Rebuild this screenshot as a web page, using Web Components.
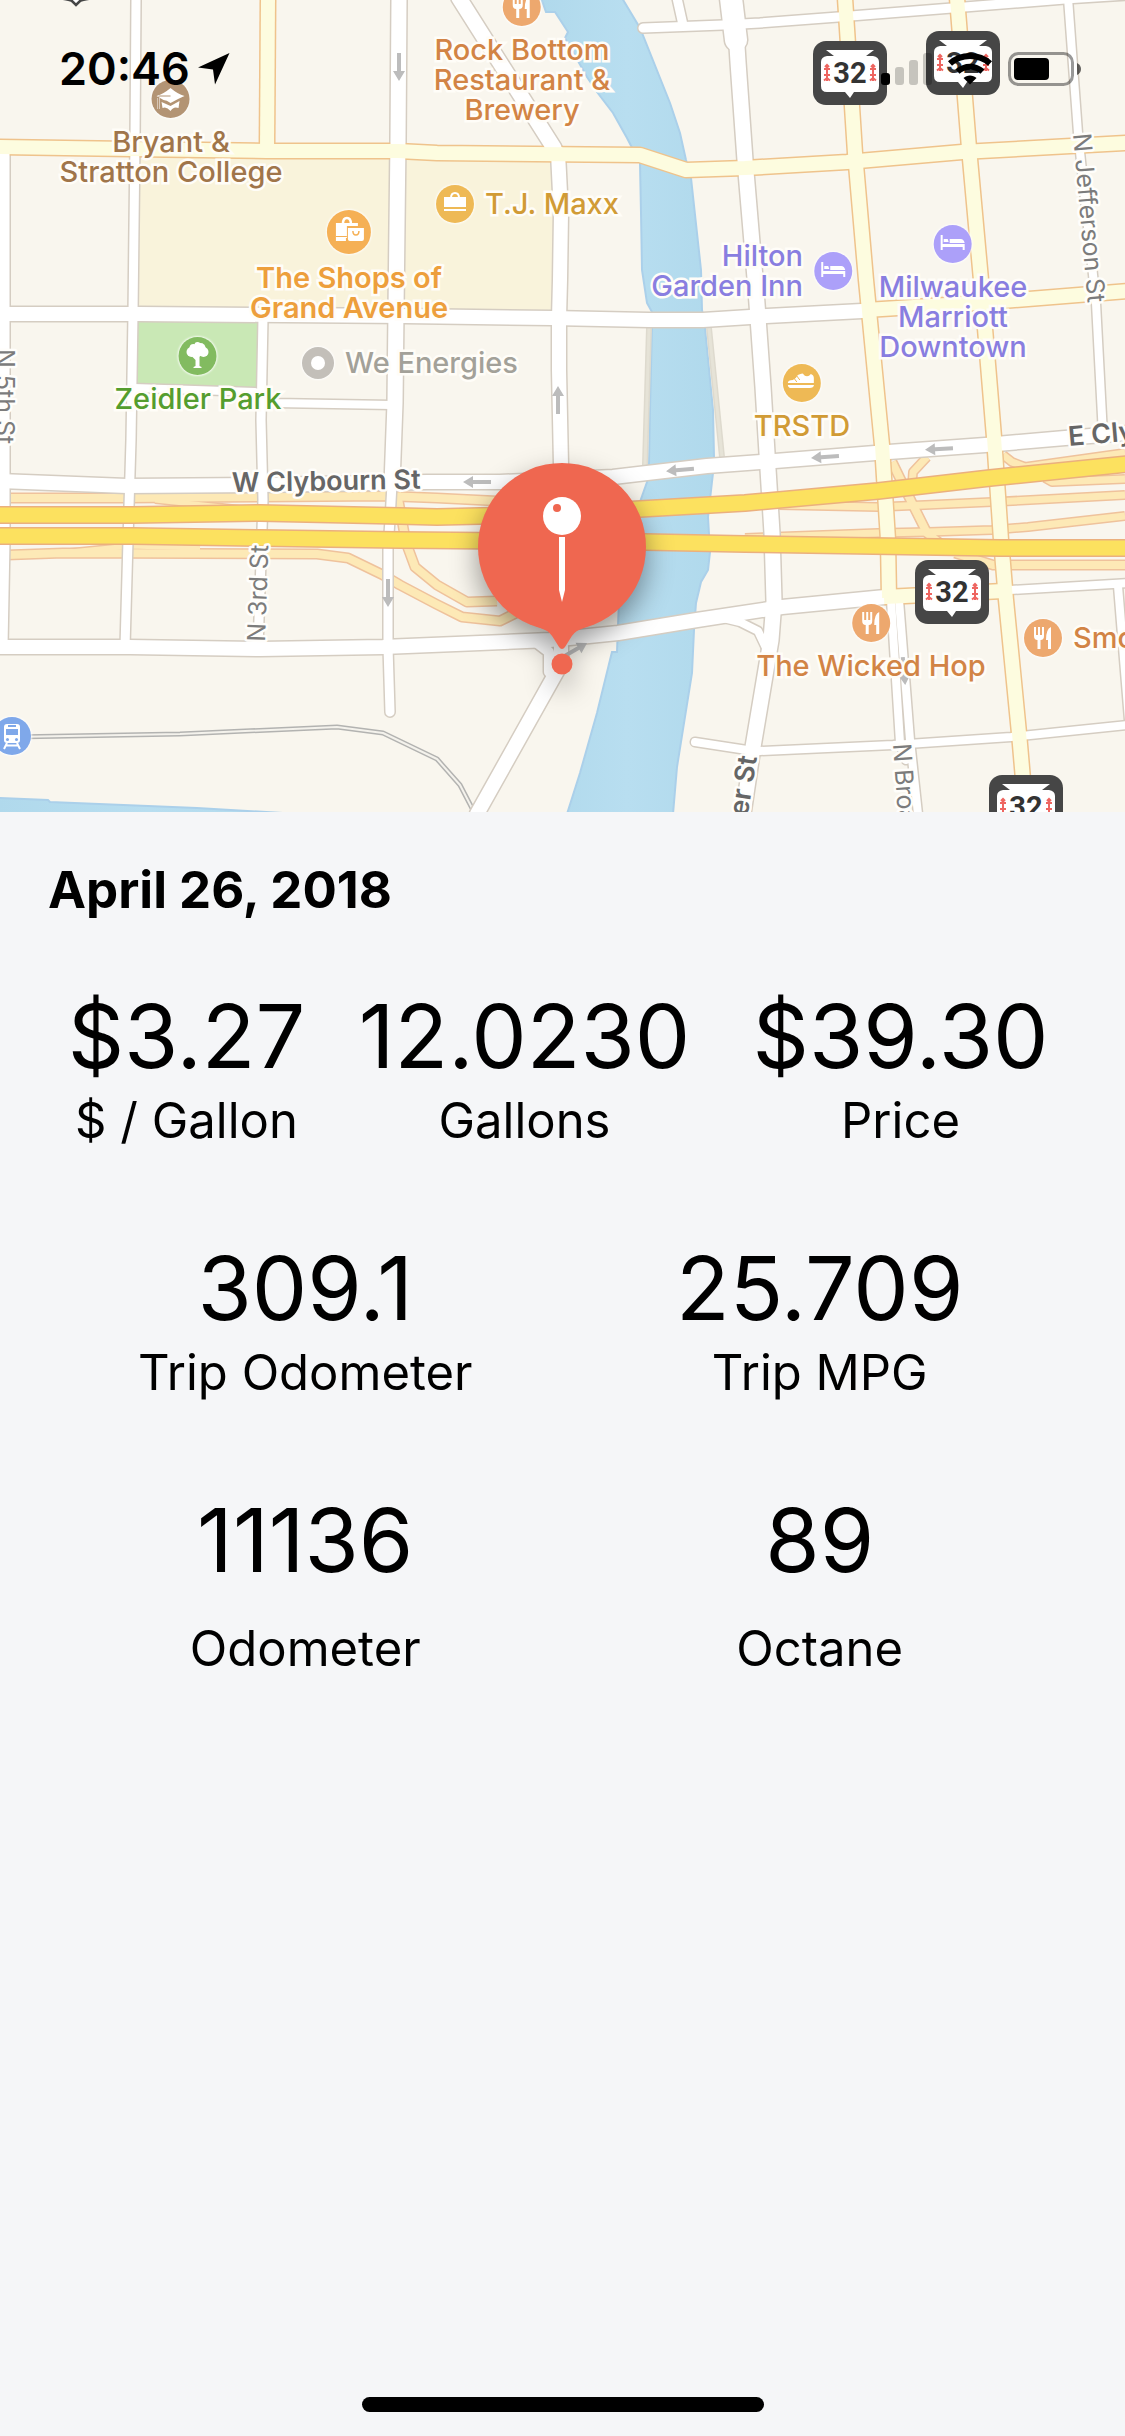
<!DOCTYPE html>
<html lang="en">
<head>
<meta charset="utf-8">
<meta name="viewport" content="width=device-width, initial-scale=1">
<title>Fill-up details</title>
<style>
  html, body { margin: 0; height: 100%; }
  body { background: #f5f6f8; color: #000; font-family: Inter, "Liberation Sans", sans-serif; }
</style>
</head>
<body>
<fillup-screen>
  <status-bar slot="status" time="20:46"></status-bar>
  <city-map slot="map">
    <map-place icon="school" style="--x:171;--y:99;--tint:#b39474;--ink:#a0754a">Bryant &amp;<br>Stratton College</map-place>
    <map-place icon="food" style="--x:522;--y:7;--tint:#eda86e;--ink:#d28445">Rock Bottom<br>Restaurant &amp;<br>Brewery</map-place>
    <map-place icon="bag" side="right" style="--x:455;--y:204;--tint:#eeb955;--ink:#d19b35">T.J. Maxx</map-place>
    <map-place icon="mall" major style="--x:349;--y:232;--r:22px;--tint:#f5b055;--ink:#ed9f3c">The Shops of<br>Grand Avenue</map-place>
    <map-place icon="tree" style="--x:198;--y:356;--tint:#82bb60;--ink:#559d2e">Zeidler Park</map-place>
    <map-place icon="dot" side="right" style="--x:318;--y:363;--r:16px;--tint:#c3bfb9;--ink:#a3a199">We Energies</map-place>
    <map-place icon="bed" side="left" style="--x:833;--y:271;--tint:#aca0f9;--ink:#897ee0">Hilton<br>Garden Inn</map-place>
    <map-place icon="bed" style="--x:953;--y:244;--tint:#aca0f9;--ink:#897ee0">Milwaukee<br>Marriott<br>Downtown</map-place>
    <map-place icon="shoe" style="--x:802;--y:383;--tint:#eeb955;--ink:#d19b35">TRSTD</map-place>
    <map-place icon="food" style="--x:871;--y:623;--tint:#eda86e;--ink:#d28445">The Wicked Hop</map-place>
    <map-place icon="food" side="right" style="--x:1043;--y:638;--tint:#eda86e;--ink:#d28445">Smo</map-place>
    <map-place icon="train" style="--x:12;--y:736;--tint:#7fa8ea"></map-place>
    <route-shield style="--x:850;--y:73">32</route-shield>
    <route-shield style="--x:963;--y:63">32</route-shield>
    <route-shield style="--x:952;--y:592">32</route-shield>
    <route-shield style="--x:1026;--y:807">32</route-shield>
    <map-pin style="--x:562;--y:664"></map-pin>
  </city-map>
  <span slot="date">April 26, 2018</span>
  <stat-row three>
    <stat-item label="$ / Gallon">$3.27</stat-item>
    <stat-item label="Gallons">12.0230</stat-item>
    <stat-item label="Price">$39.30</stat-item>
  </stat-row>
  <stat-row>
    <stat-item label="Trip Odometer">309.1</stat-item>
    <stat-item label="Trip MPG">25.709</stat-item>
  </stat-row>
  <stat-row>
    <stat-item loose label="Odometer">11136</stat-item>
    <stat-item loose label="Octane">89</stat-item>
  </stat-row>
</fillup-screen>

<script>
const define = (name, html, setup) => {
  const template = document.createElement('template');
  template.innerHTML = html;
  customElements.define(name, class extends HTMLElement {
    constructor() {
      super();
      this.attachShadow({ mode: 'open' }).append(template.content.cloneNode(true));
    }
    connectedCallback() { if (setup) setup(this, this.shadowRoot); }
  });
};

define('fillup-screen', `
  <style>
    :host { display: flex; flex-direction: column; min-height: 100vh; }
    header { position: relative; }
    .status { position: absolute; inset: 0 0 auto 0; z-index: 2; }
    main { flex: 1; padding: 46px 48px 0; }
    h1 { margin: 0 0 60px; font-size: 51px; line-height: 64px; font-weight: 700; }
    .stats { display: flex; flex-direction: column; gap: 82px; }
    footer { display: flex; justify-content: center; padding: 24px; }
    .home { width: 402px; height: 15px; border-radius: 8px; background: #000; }
  </style>
  <header>
    <slot name="map"></slot>
    <div class="status"><slot name="status"></slot></div>
  </header>
  <main>
    <h1><slot name="date"></slot></h1>
    <div class="stats"><slot></slot></div>
  </main>
  <footer><div class="home"></div></footer>
`);

define('stat-row', `
  <style>
    :host { display: grid; grid-template-columns: 1fr 1fr; }
    :host([three]) { grid-template-columns: 277fr 399fr 353fr; }
  </style>
  <slot></slot>
`);

define('stat-item', `
  <style>
    :host { display: flex; flex-direction: column; align-items: center; white-space: nowrap; }
    .value { font-size: 88px; line-height: 108px; }
    .label { font-size: 49px; line-height: 62px; }
    :host([loose]) { gap: 24px; }
  </style>
  <div class="value"><slot></slot></div>
  <div class="label"></div>
`, (el, root) => { root.querySelector('.label').textContent = el.getAttribute('label'); });

define('status-bar', `
  <style>
    :host { display: flex; align-items: center; gap: 16px; height: 34px; padding: 52px 44px 0 59px; }
    time { font-size: 45px; line-height: 34px; font-weight: 600; }
    svg { display: block; flex: none; }
    .grow { flex: 1; }
    .where { margin-left: -8px; }
  </style>
  <time></time>
  <svg class="where" width="32" height="32" viewBox="0 0 32 32"><path d="M0 14.500L31.500 0 17 31.500 15 16.500z"/></svg>
  <div class="grow"></div>
  <svg width="51" height="34" viewBox="0 0 51 34">
    <rect y="21" width="9" height="12" rx="3"/>
    <g opacity=".2"><rect x="14" y="15" width="9" height="18" rx="3"/><rect x="28" y="8" width="9" height="25" rx="3"/><rect x="42" y="1" width="9" height="32" rx="3"/></g>
  </svg>
  <svg width="44" height="34" viewBox="0 0 44 34">
    <g fill="none" stroke="#000" stroke-width="6"><path d="M2 11.500C13 1.500 31 1.500 42 11.500"/><path d="M9.500 19.500C17 13 27 13 34.500 19.500"/></g>
    <path d="M15.500 26C19 22.500 25 22.500 28.500 26L22 32.500z"/>
  </svg>
  <svg width="73" height="34" viewBox="0 0 73 34">
    <rect x="1.500" y="1.500" width="63" height="31" rx="9" fill="none" stroke="#000" stroke-width="3" opacity=".4"/>
    <rect x="6" y="6" width="35" height="22" rx="4"/>
    <path d="M69 11q4 2 4 6t-4 6z" opacity=".6"/>
  </svg>
`, (el, root) => { root.querySelector('time').textContent = el.getAttribute('time'); });

/* Items on the map stand at --x / --y of the 1125 x 812 drawing. */
const anchored = `
  position: absolute;
  left: calc(var(--x) / 1125 * 100%);
  top: calc(var(--y) / 812 * 100%);
`;

const icons = {
  food: '<path d="M-9-11h2v8h2v-8h2v8h2v-8h2V-2q0 4-3.500 4V11h-3V2Q-9 2-9-2zM8-11V11H5V2H3Q3-9 8-11z"/>',
  school: '<path d="M-14-3Q-7-5 0-11 7-5 14-3 7 0 0 4-4 1-7 1zM-9 3 0 7 9 2 8 9Q3 7 0 12-4 7-8 9zM-13-1h2v11h-2z"/><path d="M0-3h-11q-1 0-1 2v11" fill="none" stroke="var(--tint)" stroke-width="1"/>',
  bag: '<path d="M-11-7h22V3h-22zM-11 5h22v2h-22z"/><path d="M-4-6q0-5 4-5t4 5" fill="none" stroke="#fff" stroke-width="2"/>',
  mall: '<path d="M-13-9h22v3H-2v12h-11zM-13 5.500h10V9h-10zM-1-4h16V7q0 2-2 2H1q-2 0-2-2z"/><path d="M-13 4.500h11" stroke="var(--tint)"/><path d="M-6-8q0-6 4-6t4 6" fill="none" stroke="#fff" stroke-width="2.500"/><path d="M4-1q0 4 3 4t3-4" fill="none" stroke="var(--tint)" stroke-width="1.500"/>',
  tree: '<circle cx="-6" cy="-4" r="5"/><circle cx="6" cy="-4" r="5"/><circle cx="-4" cy="-8" r="4"/><circle cx="3" cy="-8" r="5"/><circle cx="0" cy="-11" r="3"/><circle cx="0" cy="-3" r="4"/><path d="M-2-2h4L2 10l2 1v1h-8v-1l2-1v-6l-4-4z"/>',
  dot: '<circle r="7"/>',
  bed: '<path d="M-12-9h2V0h22v6h-2V3h-20v3h-2zM-9-5h4l1 3h-5zM-3-5H8q3 0 4 4H-3z"/>',
  shoe: '<path d="M-14 0q0-3 5-3 3-1 5-5 6-3 6 0 4 3 7-1 3 1 3 4v5zM-14 2h26v1q-1 2-4 2H-12q-2-1-2-3z"/><path d="M-8-5l3 4M-5-7l3 4" stroke="var(--tint)" stroke-width="1"/>',
  train: '<path d="M-5-12H5q3 0 3 3V4q0 3-3 3H-5q-3 0-3-3v-13q0-3 3-3z"/><g fill="var(--tint)"><path d="M-4-11h8v2h-8zM-6-7H6v6H-6z"/><circle cx="-4.500" cy="3.500" r="1.500"/><circle cx="4.500" cy="3.500" r="1.500"/></g><path d="M-5 7-8 13M5 7 8 13M-6 9.500H6" stroke="#fff" stroke-width="2"/>'
};

define('map-place', `
  <style>
    :host { ${anchored} --r: 19px; display: flex; flex-direction: column; align-items: center; gap: 9px; width: max-content;
      transform: translate(-50%, calc(var(--r) * -1)); color: var(--ink); text-align: center; white-space: nowrap;
      font-size: 29px; line-height: 30px; font-weight: 500; }
    :host([major]) { font-weight: 600; }
    :host([side]) { flex-direction: row; gap: 11px; text-align: left; transform: translate(calc(var(--r) * -1), -50%); }
    :host([side="left"]) { flex-direction: row-reverse; text-align: right; transform: translate(calc(var(--r) - 100%), -50%); }
    svg { flex: none; width: calc(var(--r) * 2); height: calc(var(--r) * 2); border-radius: 50%; background: var(--tint);
      box-shadow: 0 0 2px 1px #fffc; fill: #fff; }
    .label { -webkit-text-stroke: 5px #fffdf8; paint-order: stroke fill; }
  </style>
  <svg aria-hidden="true"></svg>
  <div class="label"><slot></slot></div>
`, (el, root) => {
  const svg = root.querySelector('svg');
  const r = parseInt(el.style.getPropertyValue('--r')) || 19;
  svg.setAttribute('viewBox', [-r, -r, 2 * r, 2 * r].join(' '));
  svg.innerHTML = icons[el.getAttribute('icon')];
});

define('route-shield', `
  <style>
    :host { ${anchored} display: grid; place-items: center; width: 74px; height: 64px; transform: translate(-50%, -50%);
      color: #333; font: 700 29px/32px Roboto, "Liberation Sans", sans-serif; }
    svg, span { grid-area: 1 / 1; }
    span { z-index: 1; }
  </style>
  <svg width="74" height="64" viewBox="0 0 74 64" aria-hidden="true">
    <rect width="74" height="64" rx="13" fill="#464646"/>
    <path d="M13 9H61L53 15H60Q66 16 66 21V45Q66 51 60 51H41L37 57 32 51H14Q8 51 8 45V21Q8 16 14 15H21z" fill="#fff"/>
    <g stroke="#ee6560" stroke-width="2" fill="none"><path d="M14 24V40M11 28H17M11 34H17M11 39.500 14 37 17 39.500M12 26l2-2 2 2"/><path d="M60 24V40M57 28H63M57 34H63M57 39.500 60 37 63 39.500M58 26l2-2 2 2"/></g>
  </svg>
  <span><slot></slot></span>
`);

define('map-pin', `
  <style>
    :host { ${anchored} display: block; transform: translate(-50%, -201px); }
    svg { display: block; overflow: visible; filter: drop-shadow(0 12px 14px rgba(0, 0, 0, .4)); }
  </style>
  <svg width="168" height="212" viewBox="0 0 168 212" aria-hidden="true">
    <g fill="#ef6750"><circle cx="84" cy="84" r="84"/><path d="M58 163L67 167Q72 169 76 176L81 184Q84 188 87 184L92 176Q96 169 101 167L110 163z"/><circle cx="84" cy="201" r="10.500"/></g>
    <circle cx="84" cy="53" r="19" fill="#fff"/><circle cx="79" cy="45" r="4" fill="#ef6750"/>
    <path d="M81 74h6v53l-3 12-3-12z" fill="#fff"/>
  </svg>
`);

/* Streets: [width, points]; each class is drawn as a casing and then a fill. */
const streets = {
  path: [[3, '649,328 645,465'], [3, '709,328 722,457']],
  ramp: [
    [8, '7,498 127,498 262,497 385,496 437,498 497,501 560,506'],
    [5, '155,500 300,515'], [5, '60,553 130,546 200,548'],
    [8, '397,493 405,537 408,548 415,567 437,585 467,602 497,601'],
    [8, '7,555 63,553 317,554 348,558 383,575 400,585 436,604 462,617 500,621 530,606'],
    [7, '778,505 878,507 925,505 992,502 1125,495'],
    [7, '745,538 878,533 928,532 992,530 1028,527 1125,516'],
    [8, '892,462 912,503 927,533 942,545'], [7, '927,457 913,472 912,486'],
    [8, '955,553 993,565 1125,565'], [7, '1003,455 1012,462 1025,467 1125,453'],
    [7, '1045,478 1052,482 1125,479']
  ],
  white: [
    [13, '3,152 3,540 1,647'], [9, '136,0 135,140 133,314 131,440 128,540 125,647'],
    [9, '263,318 261,420 263,500 261,560 258,648'], [15, '399,0 398,140 396,310 395,403 392,484'],
    [9, '392,484 390,520 388,548 388,647 390,712'], [15, '459,-2 554,148'],
    [14, '558,153 561,213 560,280 559,318 559,370 561,465 561,664 477,814'],
    [14, '-2,314 140,314 405,316 552,318 649,320 703,320 750,317 862,311'],
    [14, '-2,481 127,486 260,485 427,482 500,482 613,477 647,473 707,466 775,461 875,453 985,445 1065,438 1127,433'],
    [14, '-2,647 130,647 260,649 383,647 480,643 550,640 618,633 697,620 782,607 885,597'],
    [22, '731,-2 736,40'], [15, '736,30 738,62 745,160 756,290 763,387 767,453 772,533 774,601 771,640 753,747 743,814'],
    [9, '677,-2 683,25'], [9, '643,28 723,25 760,23 838,17 952,8 1065,-1 1127,-5'],
    [8, '1068,-2 1078,133 1096,303 1103,435'],
    [8, '891,600 900,743 906,760'], [8, '899,600 910,740 918,814'],
    [8, '695,742 747,750 760,751 893,745 1011,737 1127,725'],
    [8, '1010,590 1113,584 1127,583'], [8, '1118,586 1129,720'],
    [8, '715,616 740,622 758,631 767,650'],
    [8, '134,388 255,392 275,403 392,405'], [10, '536,642 549,652 549,672']
  ],
  yellow: [
    [14, '-2,147 130,149 267,151 398,151 437,153 640,155 686,170 745,168 847,162 962,152 1127,143'],
    [14, '268,-2 267,150'], [14, '845,-2 855,153 866,280 882,445 888,540 889,598'],
    [14, '957,-2 969,148 981,280 994,437 1001,540 1006,600 1019,733 1026,814'],
    [14, '866,310 978,303 1127,291'], [14, '884,597 905,596 1003,591']
  ],
  motorway: [
    [15, '-2,515 133,515 260,513 400,516 437,517 480,516 560,514 640,509 745,503 878,491 990,478 1127,464'],
    [15, '-2,536 133,536 260,538 400,540 645,542 745,544 1000,548 1127,548']
  ]
};
const inks = {
  path: ['#dedace', '#e6e3d7'], ramp: ['#efc29c', '#fde9b6'], white: ['#d5cdc2', '#ffffff'],
  yellow: ['#efc38c', '#fdfcdf'], motorway: ['#ebb07e', '#fce15f']
};
const lines = (kind, part) => streets[kind].map(([w, pts]) =>
  `<polyline points="${pts}" stroke="${inks[kind][part]}" stroke-width="${part ? w : w + 3}"/>`).join('');
const both = kind => lines(kind, 0) + lines(kind, 1);
const arrow = (x, y, turn) => `<path d="M0-14 6-4H2V14H-2V-4H-6z" transform="translate(${x} ${y}) rotate(${turn})"/>`;
const street = (x, y, turn, text, more = '') => `<text transform="translate(${x} ${y}) rotate(${turn})" ${more}>${text}</text>`;

define('city-map', `
  <style>
    :host { display: block; position: relative; overflow: hidden; }
    svg { display: block; width: 100%; height: auto; }
    text { font-family: Inter, "Liberation Sans", sans-serif; font-size: 25px; fill: #7c7c7c;
      stroke: #fffefb; stroke-width: 5px; stroke-linejoin: round; paint-order: stroke; }
    text.main { font-size: 27px; font-weight: 600; fill: #666; }
  </style>
  <svg viewBox="0 0 1125 812" aria-hidden="true">
    <defs><linearGradient id="water"><stop offset="0" stop-color="#b0d9ec"/><stop offset=".5" stop-color="#b8def0"/><stop offset="1" stop-color="#b0d9ec"/></linearGradient></defs>
    <rect width="1125" height="812" fill="#f9f6ee"/>
    <path d="M135 150H555L560 318H135z" fill="#f9f3db"/>
    <path d="M135 318H262V388H135z" fill="#c9e8b5"/>
    <g fill="url(#water)" stroke="#abd0ea" stroke-width="2">
      <path d="M541-2 546 12H555L568 32 565 38 587 77 597 92 613 113 627 138 640 163 641 213 642 270 647 303 652 312V328L650 410 649 463 647 482 640 502 630 550 619 600 617 652H612L610 660 597 713 580 773 567 814H673L677 767 692 673 694 630 696 603 701 582 708 570 710 552 708 517 713 473 714 457 713 410 705 328 702 310 701 270 697 233 691 178 686 160 680 133 670 103 640 28 628 8 622-2z"/>
      <path d="M-2 798 48 800 50 802 197 808 300 814H-2z"/>
    </g>
    <g fill="none" stroke-linejoin="round">
      <polyline points="12,737 180,734 337,727 383,733 437,759 460,785 474,812" stroke="#b3b3b1" stroke-width="5"/>
      <polyline points="12,737 180,734 337,727 383,733 437,759 460,785 474,812" stroke="#f4f2ec" stroke-width="2"/>
      ${both('path')}${both('ramp')}
      <g stroke-linecap="round">${lines('white', 0)}</g>${lines('yellow', 0)}
      <g stroke-linecap="round">${lines('white', 1)}</g>${lines('yellow', 1)}
      ${both('motorway')}
    </g>
    <g fill="#bcbcbc">
      ${arrow(399, 67, 180)}${arrow(388, 593, 180)}${arrow(558, 400, 0)}${arrow(477, 482, -90)}
      ${arrow(680, 470, -95)}${arrow(825, 457, -94)}${arrow(939, 449, -93)}${arrow(575, 650, 60)}${arrow(904, 671, 175)}
    </g>
    <path d="M56-2Q68-1 72 1L76 5 80 1Q84-1 96-2" fill="#fff" stroke="#464646" stroke-width="2.500"/>
    ${street(-4, 349, 90, 'N 5th St')}
    ${street(265, 642, -88, 'N 3rd St')}
    ${street(1073, 134, 85, 'N Jefferson St')}
    ${street(893, 744, 86, 'N Broa')}
    ${street(232, 492, -1, 'W Clybourn St', 'class="main"')}
    ${street(1069, 446, -5, 'E Cly', 'class="main"')}
    ${street(757, 757, -81, 'er St', 'class="main" text-anchor="end"')}
  </svg>
  <slot></slot>
`);
</script>
</body>
</html>
